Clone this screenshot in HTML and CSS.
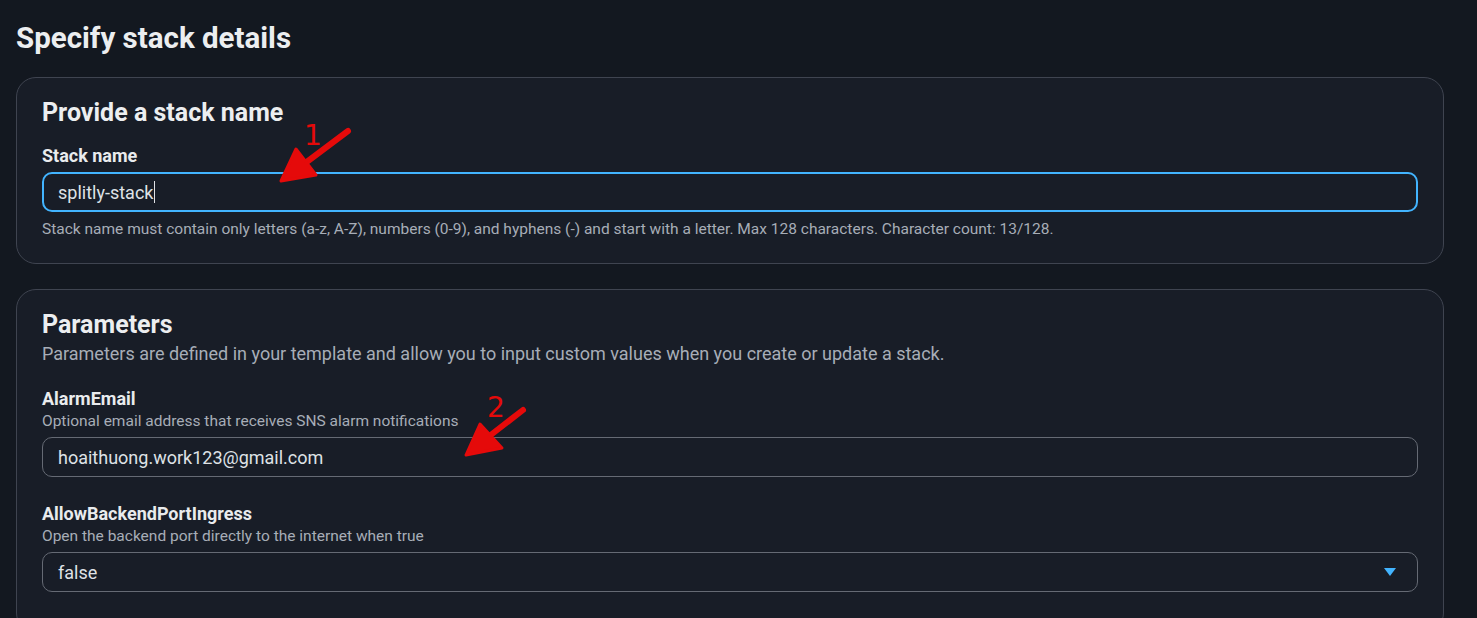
FILE: index.html
```html
<!DOCTYPE html>
<html lang="en">
<head>
    <meta charset="UTF-8">
    <meta name="viewport" content="width=device-width, initial-scale=1.0">
    <title>Specify stack details</title>
    <link rel="stylesheet" href="styles.css">
</head>
<body>
    <div class="page">
        <h1 class="page-title">Specify stack details</h1>

        <section class="panel">
            <h2 class="panel-title">Provide a stack name</h2>
            <div class="field">
                <label class="field-label" for="stack-name">Stack name</label>
                <div class="input focused" id="stack-name">splitly-stack<span class="caret"></span></div>
                <p class="field-hint">Stack name must contain only letters (a-z, A-Z), numbers (0-9), and hyphens (-) and start with a letter. Max 128 characters. Character count: 13/128.</p>
            </div>
        </section>

        <section class="panel params">
            <h2 class="panel-title">Parameters</h2>
            <p class="panel-desc">Parameters are defined in your template and allow you to input custom values when you create or update a stack.</p>

            <div class="field">
                <label class="field-label">AlarmEmail</label>
                <p class="field-desc">Optional email address that receives SNS alarm notifications</p>
                <div class="input">hoaithuong.work123@gmail.com</div>
            </div>

            <div class="field">
                <label class="field-label">AllowBackendPortIngress</label>
                <p class="field-desc">Open the backend port directly to the internet when true</p>
                <div class="input select">
                    <span>false</span>
                    <svg class="select-arrow" width="14" height="10" viewBox="0 0 14 10"><polygon points="1,1 13,1 7,9" fill="#42b4ff"/></svg>
                </div>
            </div>
        </section>
    </div>

    <!-- annotation arrows -->
    <svg class="marks" width="1477" height="618" viewBox="0 0 1477 618">
        <g fill="#e50a0a" stroke="#e50a0a" stroke-linecap="round" stroke-linejoin="round">
            <line x1="348" y1="131" x2="300" y2="167" stroke-width="6"/>
            <polygon points="281,181 296,149 316,175" stroke-width="3"/>
            <line x1="523" y1="410" x2="483" y2="441" stroke-width="6"/>
            <polygon points="466,455 480,424 502,448" stroke-width="3"/>
        </g>
        <text x="304" y="145" class="mark-num">1</text>
        <text x="487" y="417" class="mark-num">2</text>
    </svg>
</body>
</html>
```

FILE: styles.css
```css
body {
    margin: 0;
    background-color: #131820;
    font-family: Roboto, "Liberation Sans", sans-serif;
    color: #e9ebed;
    overflow: hidden;
}
.page {
    padding: 18px 33px 0 16px;
}
.page-title {
    font-size: 29.5px;
    line-height: 40px;
    font-weight: 700;
    margin: 0 0 19px;
    color: #eceef0;
}
.panel {
    background-color: #181d27;
    border: 1px solid #3f4450;
    border-radius: 20px;
    padding: 20px 25px 24px;
    margin-bottom: 25px;
}
/* the parameter list goes on below the fold */
.params {
    padding-bottom: 40px;
}
.panel-title {
    font-size: 25px;
    line-height: 30px;
    font-weight: 700;
    margin: 0;
    color: #eceef0;
}
.panel-desc {
    font-size: 18px;
    line-height: 25px;
    margin: 1px 0 0;
    color: #a7adb7;
}
.field {
    margin-top: 15px;
}
.panel-desc + .field {
    margin-top: 20px;
}
.field + .field {
    margin-top: 24px;
}
.field-label {
    display: block;
    font-size: 18px;
    line-height: 25px;
    font-weight: 700;
    color: #e9ebed;
}
.field-desc {
    font-size: 15.5px;
    line-height: 20px;
    margin: 0 0 6px;
    color: #a7adb7;
}
.input {
    height: 40px;
    box-sizing: border-box;
    border: 1px solid #656a74;
    border-radius: 10px;
    padding: 0 15px;
    display: flex;
    align-items: center;
    font-size: 18px;
    color: #dfe2e6;
    background-color: #181d27;
}
.input.focused {
    border: 2px solid #42b4ff;
    padding: 0 14px;
    margin-top: 4px;
}
.caret {
    display: inline-block;
    width: 1px;
    height: 22px;
    background-color: #dfe2e6;
    margin-left: 1px;
}
.select {
    justify-content: space-between;
    padding-right: 20px;
}
.field-hint {
    font-size: 15.5px;
    line-height: 20px;
    margin: 7px 0 0;
    color: #a7adb7;
}
.marks {
    position: absolute;
    left: 0;
    top: 0;
    pointer-events: none;
}
.mark-num {
    font-family: "DejaVu Sans", sans-serif;
    font-size: 28px;
    fill: #e50a0a;
}
```
